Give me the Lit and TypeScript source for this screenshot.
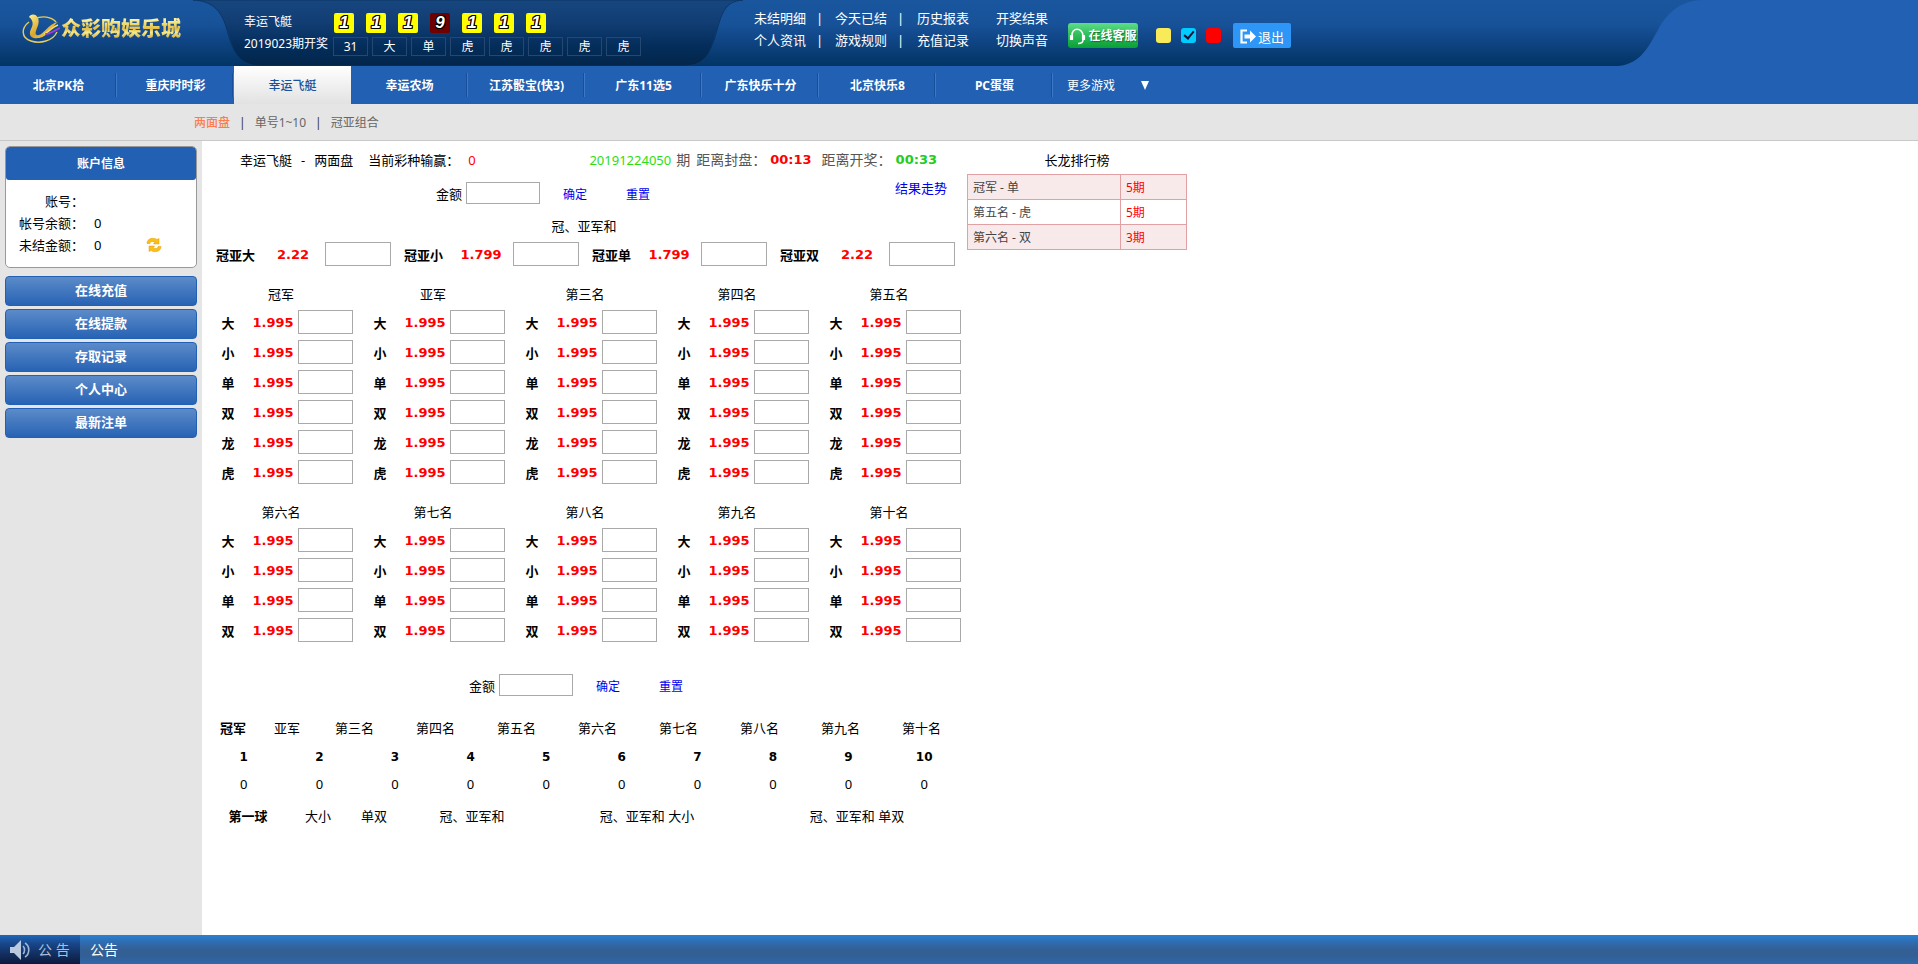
import { LitElement, html, css, svg } from "lit";
import { customElement, state } from "lit/decorators.js";
import { classMap } from "lit/directives/class-map.js";

const base = css`
  :host { display: block; box-sizing: border-box; }
  *, *::before, *::after { box-sizing: border-box; }
  a { color: inherit; text-decoration: none; }
  button, input { font: inherit; margin: 0; }
  button { border: 0; padding: 0; background: none; color: inherit; cursor: pointer; }
  h1, h2, p, ul, dl, dd { margin: 0; padding: 0; font-weight: normal; font-size: inherit; }
  ul { list-style: none; }
`;

@customElement("site-header")
export class SiteHeader extends LitElement {
  static styles = [base, css`
    :host { background: #2160b2; color: #fff; }
    .bar { position: relative; display: flex; height: 66px; white-space: nowrap; }
    .sheet { position: absolute; left: 0; top: 0; height: 66px; width: 1702px; }
    .logo { position: relative; display: flex; align-items: center; gap: 1px; width: 193px; padding: 0 0 8px 22px; }
    .logo svg { width: 38px; height: 31px; flex: none; }
    .brand {
      font-size: 20px; line-height: 28px; font-weight: 900;
      background: linear-gradient(#fdf3a0 15%, #e3bd45 50%, #f7e888 62%, #c99b2a 90%);
      -webkit-background-clip: text; background-clip: text; color: transparent;
    }
    .draw { position: relative; width: 550px; padding: 13px 0 0 51px; display: grid; grid-template-columns: 89px 1fr; grid-template-rows: 20px 19px; row-gap: 4px; }
    .name { line-height: 18px; }
    .issue { line-height: 14px; }
    .balls { display: flex; gap: 12px; padding-left: 1px; }
    .ball {
      width: 20px; height: 20px; border-radius: 2px; background: #ff0; text-align: center;
      font: italic bold 17px/20px "Liberation Sans", sans-serif;
      text-shadow: 1px 0 #000, -1px 0 #000, 0 1px #000, 0 -1px #000, 1px 1px #000, -1px -1px #000, 1px -1px #000, -1px 1px #000;
    }
    .ball.nine { background: #700000; }
    .facts { display: flex; gap: 4px; }
    .fact { width: 35px; border: 1px solid #24486f; text-align: center; line-height: 17px; }
    .links { position: relative; display: grid; grid-template-columns: 81px 82px 79px 52px; grid-auto-rows: 22px; padding: 7px 0 0 11px; font-size: 13px; line-height: 22px; }
    .links li { display: flex; gap: 10px; }
    .tools { position: relative; display: flex; align-items: center; height: 25px; margin: 23px 0 0 20px; }
    .service { display: flex; align-items: center; justify-content: center; gap: 2px; width: 70px; height: 25px; border-radius: 3px; background: linear-gradient(#5fdc8a, #2cbc57 50%, #0a9f38); font-weight: bold; font-size: 12px; text-shadow: 1px 1px 1px #0a7028; }
    .themes { display: flex; gap: 10px; margin: 0 12px 0 18px; }
    .theme { appearance: none; width: 15px; height: 15px; border-radius: 3px; position: relative; }
    .yellow { background: #f8ea59; }
    .cyan { background: #0cf; }
    .red { background: #f00; }
    .theme:checked::after { content: ""; position: absolute; left: 5px; top: 1px; width: 6px; height: 10px; border: solid #113; border-width: 0 2px 2px 0; transform: rotate(40deg); }
    .exit { display: flex; align-items: center; justify-content: center; gap: 2px; width: 58px; height: 25px; padding-top: 2px; border-radius: 2px; background: #2d96f7; font-size: 13px; }
    .games { display: flex; height: 38px; font-weight: bold; line-height: 40px; white-space: nowrap; }
    .game { width: 117px; text-align: center; background: linear-gradient(#184f9b, #184f9b) 115px 7px / 1px 24px no-repeat, linear-gradient(#3c78c6, #3c78c6) 116px 7px / 1px 24px no-repeat; }
    .game.on { background: linear-gradient(#fff, #e2e2e2); color: #19519c; font-weight: 500; }
    .more { display: flex; gap: 26px; padding-left: 14px; font-weight: normal; }
    .caret { width: 8px; height: 9px; align-self: center; }
  `];

  balls = [1, 1, 1, 9, 1, 1, 1];
  facts = ["31", "大", "单", "虎", "虎", "虎", "虎", "虎"];
  links = ["未结明细", "今天已结", "历史报表", "开奖结果", "个人资讯", "游戏规则", "充值记录", "切换声音"];
  games = ["北京PK拾", "重庆时时彩", "幸运飞艇", "幸运农场", "江苏骰宝(快3)", "广东11选5", "广东快乐十分", "北京快乐8", "PC蛋蛋"];

  render() {
    return html`
      <header class="bar">
        <svg class="sheet" viewBox="0 0 1702 66" preserveAspectRatio="none" aria-hidden="true">
          <defs>
            <linearGradient id="g1" x2="0" y2="1"><stop offset="0" stop-color="#19569d"/><stop offset=".33" stop-color="#18539a"/><stop offset=".6" stop-color="#104687"/><stop offset=".82" stop-color="#083c72"/><stop offset="1" stop-color="#023466"/></linearGradient>
            <linearGradient id="g2" x2="0" y2="1"><stop offset="0" stop-color="#17467f"/><stop offset=".35" stop-color="#113d73"/><stop offset=".7" stop-color="#042d5b"/><stop offset="1" stop-color="#03264a"/></linearGradient>
          </defs>
          <path fill="url(#g1)" d="M0 0H1702C1680 1 1669 12 1660 26C1650 44 1642 64 1618 66H0Z"/>
          <path fill="url(#g2)" stroke="#0c3765" d="M193 0C214 1 222 12 227 30C233 52 238 65 260 66H686C706 65 711 52 717 30C722 12 726 1 743 0Z"/>
        </svg>
        <a class="logo" href="#">
          <svg viewBox="0 0 38 31" aria-hidden="true" fill="none">
            <defs><linearGradient id="gold" x2="1" y2="1"><stop stop-color="#fff08a"/><stop offset=".5" stop-color="#d9a52c"/><stop offset="1" stop-color="#f5df6e"/></linearGradient></defs>
            <path d="M13 5C20 1 30 3 34 8M7 8C-1 14-1 24 9 27C18 30 31 27 35 18" stroke="#e6cd58" stroke-width="1.4"/>
            <path d="M7 3C8 0 14-1 16 4C18 9 15 13 14 17C13 20 14 22 17 21C22 20 26 10 36 8C30 12 27 22 17 24C9 25 6 21 9 15C11 11 12 7 7 3Z" fill="url(#gold)"/>
            <path d="M22 20C27 18 30 13 36 11" stroke="#f5df6e" stroke-width="1.4"/>
            <path d="M23 20C29 20 33 16 38 14" stroke="#a63be0" stroke-width="1.6"/>
          </svg>
          <span class="brand">众彩购娱乐城</span>
        </a>
        <section class="draw" aria-label="开奖">
          <span class="name">幸运飞艇</span>
          <div class="balls">${this.balls.map((n) => html`<span class=${classMap({ ball: true, nine: n === 9 })}>${n}</span>`)}</div>
          <span class="issue">2019023期开奖</span>
          <div class="facts">${this.facts.map((f) => html`<span class="fact">${f}</span>`)}</div>
        </section>
        <ul class="links">
          ${this.links.map((l, i) => html`<li><a href="#">${l}</a>${i % 4 < 2 ? html`<span>|</span>` : ""}</li>`)}
        </ul>
        <div class="tools">
          <button class="service">
            <svg width="17" height="18" viewBox="0 0 17 18" fill="none" stroke="#fff" aria-hidden="true">
              <path d="M3 9C2 0 14 0 14 9" stroke-width="1.6"/><path d="M2.500 8v5M14.500 8v5" stroke-width="3.200"/><path d="M14 13C14 16 12 16.500 9 16.500" stroke-width="1.500"/>
            </svg><span>在线客服</span>
          </button>
          <div class="themes" role="radiogroup" aria-label="主题">
            <input class="theme yellow" type="radio" name="theme" aria-label="黄">
            <input class="theme cyan" type="radio" name="theme" aria-label="蓝" checked>
            <input class="theme red" type="radio" name="theme" aria-label="红">
          </div>
          <button class="exit">
            <svg width="16" height="15" viewBox="0 0 16 15" aria-hidden="true"><path d="M7 1.500H1.500V13.500H7" fill="none" stroke="#fff" stroke-width="2.200"/><path d="M4.500 5.500H10V1.500L16 7.500L10 13.500V9.500H4.500Z" fill="#fff"/></svg>
            <span>退出</span>
          </button>
        </div>
      </header>
      <nav class="games">
        ${this.games.map((g, i) => html`<a href="#" class=${classMap({ game: true, on: i === 2 })}>${g}</a>`)}
        <a href="#" class="more">更多游戏<svg class="caret" viewBox="0 0 8 9" aria-hidden="true"><path d="M0 0H8L4 9Z" fill="#fff"/></svg></a>
      </nav>`;
  }
}

@customElement("account-panel")
export class AccountPanel extends LitElement {
  static styles = [base, css`
    :host { width: 202px; flex: none; background: #e5e5e5; padding: 5px; font-size: 13px; }
    .card { border: 1px solid #999; border-radius: 5px; background: #fff; height: 122px; overflow: hidden; }
    .head { background: #2160b2; color: #fff; font-weight: bold; font-size: 12px; line-height: 33px; text-align: center; border-radius: 3px; }
    .info { display: grid; grid-template-columns: 78px 53px 1fr; column-gap: 10px; grid-auto-rows: 22px; padding-top: 10px; line-height: 22px; }
    .info dt { text-align: right; grid-column: 1; }
    .refresh { width: 16px; height: 22px; margin-left: -11px; display: flex; align-items: center; }
    .menu { display: grid; gap: 3px; padding-top: 8px; }
    .item { display: block; height: 30px; line-height: 27px; text-align: center; color: #fff; font-weight: bold; border: 1px solid #2160b2; border-radius: 4px; background: linear-gradient(#5c8bc9, #2763b4); }
  `];
  items = ["在线充值", "在线提款", "存取记录", "个人中心", "最新注单"];
  render() {
    return html`
      <section class="card">
        <h2 class="head">账户信息</h2>
        <dl class="info">
          <dt>账号：</dt><dd></dd>
          <dt>帐号余额：</dt><dd>0</dd>
          <dt>未结金额：</dt><dd>0</dd>
          <button class="refresh" aria-label="刷新">
            <svg width="16" height="16" viewBox="0 0 16 16" fill="#fbc014" stroke="#e29a10" stroke-width=".5" aria-hidden="true">
              <path d="M1 6.500C1 1.500 7 0 11 2.500L13 1.500V7H7.500L9 5C6 3.800 4 4.500 4 6.500Z"/>
              <path d="M15 9.500C15 14.500 9 16 5 13.500L3 14.500V9H8.500L7 11C10 12.200 12 11.500 12 9.500Z"/>
            </svg>
          </button>
        </dl>
      </section>
      <nav class="menu">${this.items.map((t) => html`<a class="item" href="#">${t}</a>`)}</nav>`;
  }
}

@customElement("bet-board")
export class BetBoard extends LitElement {
  static styles = [base, css`
    :host { width: 762px; flex: none; margin-left: 1px; font-size: 13px; color: #000; white-space: nowrap; }
    .title { display: flex; align-items: center; height: 38px; padding: 0 28px 0 37px; }
    .title h1 { display: flex; gap: 9px; }
    .win { margin-left: 15px; }
    .loss { color: #f00; margin-left: 9px; }
    .clock { display: flex; align-items: center; margin-left: auto; font-size: 14px; color: #555; }
    .period { color: #2edc14; font-size: 13px; margin-right: 5px; }
    .close, .open, .odds { font: bold 13px/20px "DejaVu Sans", sans-serif; color: #f00; }
    .clock .label { margin: 0 4px 0 6px; }
    .close { margin-right: 4px; }
    .open { color: #22cc22; }
    .amount { display: flex; align-items: center; height: 28px; padding: 0 18px 0 233px; }
    .amount label { padding-top: 2px; }
    .amount.lower { margin-top: 29px; padding-left: 266px; }
    .box { border: 1px solid #a9a9a9; border-radius: 0; background: #fff; height: 24px; padding: 0 2px; outline: 0; }
    .money { width: 74px; height: 22px; margin: 0 23px 0 4px; }
    .act { color: #0000ee; font-size: 12px; margin-right: 39px; padding-top: 4px; }
    .trend { color: #0000ee; margin-left: auto; align-self: flex-start; line-height: 18px; }
    .sumhead { margin-top: 4px; line-height: 31px; text-align: center; }
    .sums { display: flex; gap: 16px; padding-left: 13px; }
    .sum { display: grid; grid-template-columns: 48px 58px 66px; align-items: center; width: 172px; }
    .sum .box { margin-left: 3px; width: 66px; }
    .pick { font-weight: bold; line-height: 26px; height: 24px; }
    .odds { text-align: center; padding-top: 2px; }
    .ranks { display: grid; grid-template-columns: repeat(5, 152px); padding-left: 2px; }
    .rank { display: grid; gap: 6px; padding: 12px 0 0; align-content: start; }
    .rank h2 { line-height: 32px; margin-bottom: -6px; text-align: center; }
    .bet { display: grid; grid-template-columns: 46px 44px 58px; align-items: center; }
    .bet .pick { text-align: center; }
    .bet .box { width: 55px; margin-left: 3px; }
    .tabs { display: grid; width: 756px; margin: 0 3px; line-height: 28px; text-align: center; }
    .places { margin-top: 15px; grid-template-columns: 2fr 2fr repeat(8, 3fr); }
    .trends { margin-top: 4px; grid-template-columns: 6fr 4fr 4fr 10fr 15fr 15fr; }
    .on { font-weight: bold; }
    .tally { width: 756px; margin: 0 3px; table-layout: fixed; border-collapse: collapse; text-align: center; }
    .tally th, .tally td { height: 28px; padding: 0; line-height: 20px; }
    .tally th { font: bold 12px/20px "DejaVu Sans", sans-serif; padding-top: 2px; }
  `];
  sums = [["冠亚大", "2.22"], ["冠亚小", "1.799"], ["冠亚单", "1.799"], ["冠亚双", "2.22"]];
  names = ["冠军", "亚军", "第三名", "第四名", "第五名", "第六名", "第七名", "第八名", "第九名", "第十名"];
  trends = ["第一球", "大小", "单双", "冠、亚军和", "冠、亚军和 大小", "冠、亚军和 单双"];
  @state() place = 0;

  amount(id: string, lower: boolean) {
    return html`
      <div class=${classMap({ amount: true, lower })}>
        <label for=${id}>金额</label><input id=${id} class="box money" type="text">
        <button class="act">确定</button><button class="act">重置</button>
        ${lower ? "" : html`<a class="trend" href="#">结果走势</a>`}
      </div>`;
  }
  ranks(from: number, picks: string[]) {
    return html`<div class="ranks">
      ${this.names.slice(from, from + 5).map((name, c) => html`
        <section class="rank">
          <h2>${name}</h2>
          ${picks.map((p, r) => {
            const id = `r${from + c}-${r}`;
            return html`<div class="bet"><label class="pick" for=${id}>${p}</label><span class="odds">1.995</span><input id=${id} class="box" type="text"></div>`;
          })}
        </section>`)}
    </div>`;
  }
  render() {
    return html`
      <div class="title">
        <h1><span>幸运飞艇</span><span>-</span><span>两面盘</span></h1>
        <span class="win">当前彩种输赢：</span><span class="loss">0</span>
        <div class="clock">
          <span class="period">20191224050</span><span>期</span>
          <span class="label">距离封盘：</span><span class="close">00:13</span>
          <span class="label">距离开奖：</span><span class="open">00:33</span>
        </div>
      </div>
      ${this.amount("top", false)}
      <h2 class="sumhead">冠、亚军和</h2>
      <div class="sums">
        ${this.sums.map(([n, o], i) => html`<div class="sum"><label class="pick" for="s${i}">${n}</label><span class="odds">${o}</span><input id="s${i}" class="box" type="text"></div>`)}
      </div>
      ${this.ranks(0, ["大", "小", "单", "双", "龙", "虎"])}
      ${this.ranks(5, ["大", "小", "单", "双"])}
      ${this.amount("bottom", true)}
      <nav class="tabs places">
        ${this.names.map((n, i) => html`<button class=${classMap({ on: i === this.place })} @click=${() => (this.place = i)}>${n}</button>`)}
      </nav>
      <table class="tally">
        <thead><tr>${this.names.map((_, i) => html`<th scope="col">${i + 1}</th>`)}</tr></thead>
        <tbody><tr>${this.names.map(() => html`<td>0</td>`)}</tr></tbody>
      </table>
      <nav class="tabs trends">
        ${this.trends.map((t, i) => html`<button class=${classMap({ on: i === 0 })}>${t}</button>`)}
      </nav>`;
  }
}

@customElement("streak-list")
export class StreakList extends LitElement {
  static styles = [base, css`
    :host { width: 220px; margin-left: 2px; }
    .list { width: 100%; border-collapse: collapse; table-layout: fixed; color: #444; }
    .list caption { font-size: 13px; line-height: 20px; color: #000; padding: 9px 0 4px; }
    .name { width: 153px; }
    .list td { border: 1px solid #e0a0a4; height: 25px; padding: 2px 5px 0; line-height: 20px; }
    .list tr:nth-child(odd) td { background: #f8eaeb; }
    .list .run { color: #f00; }
  `];
  rows = [["冠军 - 单", "5期"], ["第五名 - 虎", "5期"], ["第六名 - 双", "3期"]];
  render() {
    return html`<table class="list"><caption>长龙排行榜</caption>
      <colgroup><col class="name"><col></colgroup>
      <tbody>${this.rows.map(([n, r]) => html`<tr><td>${n}</td><td class="run">${r}</td></tr>`)}</tbody></table>`;
  }
}

@customElement("app-root")
export class AppRoot extends LitElement {
  static styles = [base, css`
    :host { display: flex; flex-direction: column; min-height: 100vh; background: #fff; color: #000; font: 12px/20px "Noto Sans", "Noto Sans CJK SC", sans-serif; }
    .sub { display: flex; align-items: center; gap: 9px; height: 37px; padding: 2px 0 0 194px; background: #e5e5e5; border-bottom: 1px solid #c8c8c8; color: #666; }
    .sub .on { color: #fb7d4e; font-weight: 500; }
    .bar { color: #333; }
    .page { display: flex; flex: 1; }
    .foot { display: flex; height: 29px; background: linear-gradient(#2a80d2, #2f6cb0 25%, #335f94 50%, #325f96 75%, #2f69ad); color: #fff; font-size: 14px; line-height: 29px; }
    .tag { display: flex; align-items: center; gap: 8px; width: 80px; padding-left: 10px; background: linear-gradient(#1f68b8, #18468a 30%, #122f60 65%, #0c1b3e); color: #a9bfdc; }
    .news { padding-left: 10px; }
  `];
  render() {
    return html`
      <site-header></site-header>
      <nav class="sub">
        <a class="on" href="#">两面盘</a><span class="bar">|</span><a href="#">单号1~10</a><span class="bar">|</span><a href="#">冠亚组合</a>
      </nav>
      <main class="page">
        <account-panel></account-panel>
        <bet-board></bet-board>
        <streak-list></streak-list>
      </main>
      <footer class="foot">
        <div class="tag">
          ${html`<svg width="20" height="20" viewBox="0 0 20 20" aria-hidden="true">
            ${svg`<path d="M0 7H4L11 0V20L4 13H0Z" fill="#b9c9df"/><path d="M13 6C15 8 15 12 13 14M15 3C20 6 20 14 15 17" fill="none" stroke="#9fb6d6" stroke-width="1.600"/>`}
          </svg>`}
          <span>公 告</span>
        </div>
        <p class="news">公告</p>
      </footer>`;
  }
}
